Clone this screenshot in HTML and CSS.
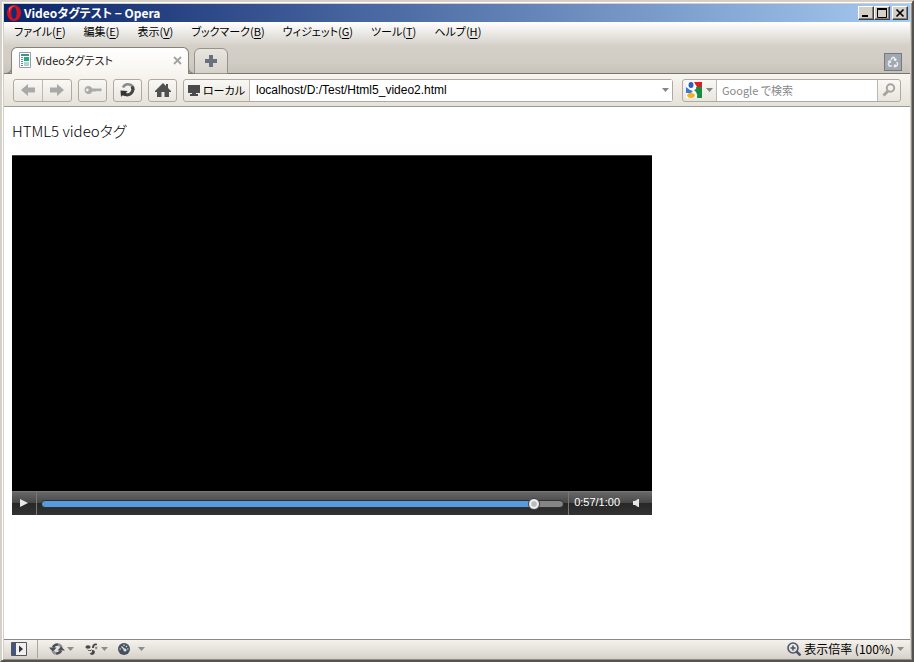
FILE: index.html
```html
<!DOCTYPE html>
<html lang="ja">
<head>
<meta charset="utf-8">
<title>Videoタグテスト - Opera</title>
<link rel="stylesheet" href="styles.css">
</head>
<body>
<div class="window">
  <header class="titlebar">
    <svg class="logo" width="16" height="16" viewBox="0 0 16 16"><ellipse cx="8" cy="8" rx="7" ry="8" fill="#d3131b"/><ellipse cx="8" cy="8" rx="2.7" ry="6" fill="#102c78"/><path d="M3 3Q6 0 9 1Q4 1 3 9Z" fill="#f35c58"/></svg>
    <h1>Videoタグテスト − Opera</h1>
    <div class="winbtns">
      <button class="winbtn" aria-label="最小化"><svg width="10" height="10" viewBox="0 0 10 10"><path d="M1 8h6" stroke="#000" stroke-width="2"/></svg></button>
      <button class="winbtn" aria-label="最大化"><svg width="10" height="10" viewBox="0 0 10 10"><path d="M.5 1v8.500h9V1" fill="none" stroke="#000"/><path d="M0 1h10" stroke="#000" stroke-width="2"/></svg></button>
      <button class="winbtn close" aria-label="閉じる"><svg width="10" height="10" viewBox="0 0 10 10"><path d="M1.500 1.500l7 7m0-7l-7 7" stroke="#000" stroke-width="1.700"/></svg></button>
    </div>
  </header>
  <div class="chrome">
    <nav class="menu">
      <a href="#">ファイル(<u>F</u>)</a>
      <a href="#">編集(<u>E</u>)</a>
      <a href="#">表示(<u>V</u>)</a>
      <a href="#">ブックマーク(<u>B</u>)</a>
      <a href="#">ウィジェット(<u>G</u>)</a>
      <a href="#">ツール(<u>T</u>)</a>
      <a href="#">ヘルプ(<u>H</u>)</a>
    </nav>
    <div class="tabs">
      <div class="tab">
        <svg width="12" height="16" viewBox="0 0 12 16"><path d="M.5.5h11v15H.5z" fill="#fff" stroke="#9a9ea1"/><path d="M2 2h8v2H2z" fill="#4a8c98"/><path d="M2 5h2v1H2zm0 2h2v1H2zm0 2h2v1H2zm0 2h2v1H2z" fill="#4b9ba4"/><path d="M5 5h5v4H5z" fill="#22ad73"/><path d="M5 10h5v4H5z" fill="#a8d5dc"/><path d="M2 13h2v1H2z" fill="#777"/></svg>
        <span class="tabname">Videoタグテスト</span>
        <button class="tabclose" aria-label="タブを閉じる"><svg width="9" height="9" viewBox="0 0 9 9"><path d="M1 1l7 7m0-7L1 8" stroke="#a3a3a3" stroke-width="1.800"/></svg></button>
      </div>
      <button class="newtab" aria-label="新しいタブ"><svg width="12" height="12" viewBox="0 0 12 12"><path d="M4 0h4v4h4v4H8v4H4V8H0V4h4z" fill="#69707f"/></svg></button>
      <button class="trash" aria-label="閉じたタブ"><svg width="12" height="12" viewBox="0 0 12 12" fill="none" stroke="#eef0f4" stroke-width="1.400"><path d="M4 4l1.500-2.500h1.500L8.500 4M9 2.500L8.600 4.200 6.800 4M9.700 6l1 2-1 2H7.500M8.500 8.500L7.200 10l1.300 1.300M4.800 10H2.300l-1-2 1.500-2.700M1.200 5.700L3 5l.7 1.800"/></svg></button>
    </div>
  </div>
  <div class="toolbar">
    <div class="group">
      <button class="seg" aria-label="戻る"><svg width="14" height="12" viewBox="0 0 14 12"><path d="M0 6l7-6v3.500h7v5H7V12z" fill="#a9a9a9"/></svg></button>
      <button class="seg" aria-label="進む"><svg width="14" height="12" viewBox="0 0 14 12"><path d="M14 6L7 0v3.500H0v5h7V12z" fill="#a9a9a9"/></svg></button>
    </div>
    <button class="tool" aria-label="パスワード"><svg width="18" height="10" viewBox="0 0 18 10"><path fill-rule="evenodd" d="M4.500 1a4 4 0 0 1 3.800 2.600H17l1 1.200-1.500 1.700H16l-1-.8-1 .8-1-.8-1 .8H8.300A4 4 0 1 1 4.500 1zM3.300 3.600a1.400 1.400 0 1 0 0 2.800 1.400 1.400 0 0 0 0-2.800z" fill="#aaa"/></svg></button>
    <button class="tool" aria-label="再読み込み"><svg width="16" height="16" viewBox="0 0 16 16"><path d="M3 5.500A5.500 5.500 0 0 1 13.500 8" fill="none" stroke="#8b8b8b" stroke-width="2.600"/><path d="M12 4.500A5.500 5.500 0 0 1 5 12.300" fill="none" stroke="#444" stroke-width="3"/><path d="M.5 8.500l7 .5-1.500 2 1 3-5-.5-1 1.500z" fill="#333"/></svg></button>
    <button class="tool" aria-label="ホーム"><svg width="16" height="14" viewBox="0 0 16 14"><path d="M8 0l3 3V1h2v4l3 3v1h-2v5H9.500V9h-3v5H2V9H0V8z" fill="#505050"/></svg></button>
    <div class="field address">
      <button class="local"><svg width="12" height="12" viewBox="0 0 12 12"><path d="M0 1h12v8H8v1h2v2H2v-2h2V9H0z" fill="#4a4a4a"/></svg>ローカル</button>
      <input type="text" aria-label="アドレス" value="localhost/D:/Test/Html5_video2.html">
      <button class="drop" aria-label="履歴"><svg width="7" height="4" viewBox="0 0 7 4"><path d="M0 0h7L3.500 4z" fill="#858585"/></svg></button>
    </div>
    <div class="field search">
      <button class="engine" aria-label="検索エンジン"><svg width="16" height="16" viewBox="0 0 16 16"><path d="M0 0h16v16H0z" fill="#fdfdfd"/><path d="M8 0h8v5h-5z" fill="#e21c25"/><path d="M10 5h6v11h-5q1-3-1-6l-2-2q3-1 2-3z" fill="#168c43"/><ellipse cx="5" cy="3" rx="2.500" ry="3" fill="#2a62c4"/><path d="M0 5l4 3 3 1-2 2H0z" fill="#3f78d2"/><ellipse cx="5" cy="13.500" rx="3.800" ry="2.400" fill="#f2b31c"/></svg><svg width="7" height="4" viewBox="0 0 7 4"><path d="M0 0h7L3.500 4z" fill="#858585"/></svg></button>
      <input type="text" aria-label="検索" placeholder="Google で検索">
      <button class="go" aria-label="検索する"><svg width="14" height="14" viewBox="0 0 14 14" fill="none" stroke="#a7a49d"><circle cx="8.500" cy="5" r="3.700" stroke-width="2"/><path d="M6 8l-4.500 4.500" stroke-width="3"/></svg></button>
    </div>
  </div>
  <main class="page">
    <p class="caption">HTML5 videoタグ</p>
    <div class="player">
      <video class="screen"></video>
      <div class="controls">
        <button class="play" aria-label="再生"><svg width="8" height="8" viewBox="0 0 8 8"><path d="M0 0l8 4-8 4z" fill="#e8e8e8"/></svg></button>
        <div class="seekbox"><input class="seek" type="range" aria-label="再生位置" min="0" max="60" step="0.1" value="57.3"></div>
        <span class="time">0:57/1:00</span>
        <button class="mute" aria-label="音量"><svg width="6" height="8" viewBox="0 0 6 8"><path d="M0 2h2l3-2h1v8H5L2 6H0z" fill="#e4e4e4"/></svg></button>
      </div>
    </div>
  </main>
  <footer class="status">
    <button class="panel" aria-label="パネル"><svg width="16" height="14" viewBox="0 0 16 14"><path d="M.5.5h15v13H.5z" fill="#f2f0ec" stroke="#4f5560"/><path d="M1 1h4v12H1z" fill="#44557f"/><path d="M8 3.500l4 3.500-4 3.500z" fill="#333"/></svg></button>
    <button class="stat" aria-label="同期"><svg width="16" height="14" viewBox="0 0 16 14"><path d="M4 5.500Q5.500 2.300 9 2.500" fill="none" stroke="#4a505b" stroke-width="2.600"/><path d="M9 2.500Q12 3 12.500 6" fill="none" stroke="#8d9096" stroke-width="2.600"/><path d="M0 5.500h7.500L4 10zM16 8.500H8.500L12 4.500z" fill="#4a505b"/><path d="M12 8.500Q10.500 11.700 7 11.500" fill="none" stroke="#4a505b" stroke-width="2.600"/><path d="M7 11.500Q4.500 11 3.700 9" fill="none" stroke="#8d9096" stroke-width="2.600"/></svg><svg width="7" height="4" viewBox="0 0 7 4"><path d="M0 0h7L3.500 4z" fill="#8d8d8d"/></svg></button>
    <button class="stat" aria-label="Unite"><svg width="14" height="14" viewBox="0 0 14 14" fill="#484848"><ellipse cx="3" cy="5" rx="2.600" ry="1.800"/><path d="M2 7q2.500 2.500 5 0l-1 2H3.500z"/><path d="M7 6Q7 2 10 1.500l2 .2V3L9.800 3.500Q9 4 9 6z"/><path d="M7 8q2.500-.5 3 2-.5 3-3.500 3l-2-1.500Q7.500 11 7 8z"/><path d="M10 5l2.500-.5-.5 2.500-1.500.5z" fill="#888"/></svg><svg width="7" height="4" viewBox="0 0 7 4"><path d="M0 0h7L3.500 4z" fill="#8d8d8d"/></svg></button>
    <button class="stat turbo" aria-label="Turbo"><svg width="12" height="12" viewBox="0 0 12 12"><circle cx="6" cy="6" r="6" fill="#46505f"/><path d="M3.500 3.500L7 7M8 3l1 1M6 1.500V3M1.500 6H3M9 6h1.500" stroke="#dce4ec" stroke-width="1.200"/><circle cx="7" cy="7" r="1.500" fill="#dce4ec"/></svg><svg width="7" height="4" viewBox="0 0 7 4"><path d="M0 0h7L3.500 4z" fill="#8d8d8d"/></svg></button>
    <button class="stat zoom"><svg width="14" height="14" viewBox="0 0 14 14" fill="none" stroke="#4b5569"><circle cx="6" cy="6" r="5" stroke-width="1.600"/><path d="M3.500 6h5M6 3.500v5" stroke-width="1.600"/><path d="M9.500 9.500l4 4" stroke-width="2.500"/></svg><span>表示倍率 (100%)</span><svg width="7" height="4" viewBox="0 0 7 4"><path d="M0 0h7L3.500 4z" fill="#8d8d8d"/></svg></button>
  </footer>
</div>
</body>
</html>
```
FILE: styles.css
```css
* { box-sizing: border-box; }
body {
  margin: 0;
  font: 12px/16px "Noto Sans CJK JP", sans-serif;
  font-feature-settings: "palt";
  color: #000;
}
button, input {
  font: inherit;
  font-feature-settings: inherit;
  color: inherit;
  background: none;
  border: 0;
  padding: 0;
  margin: 0;
}
button { display: flex; align-items: center; justify-content: center; }
svg { display: block; flex: none; }

.window {
  display: flex;
  flex-direction: column;
  min-height: 100vh;
  padding: 2px;
  border: 2px solid;
  border-color: #d4d0c8 #55534f #55534f #d4d0c8;
  background: #d4d0c8;
  box-shadow: inset 1px 1px #fff, inset -1px -1px #918e88;
}

.titlebar {
  display: flex;
  align-items: center;
  height: 18px;
  padding: 0 2px;
  color: #fff;
  background: linear-gradient(90deg, #0a246a, #a6caf0);
}
.titlebar h1 { flex: 1; margin: 0 0 0 2px; font-size: 12px; line-height: 16px; font-weight: 700; }
.winbtns { display: flex; }
.winbtn {
  width: 16px;
  height: 14px;
  background: #d4d0c8;
  border: 1px solid;
  border-color: #fff #404040 #404040 #fff;
  box-shadow: inset -1px -1px #808080;
}
.winbtn.close { margin-left: 2px; }

.chrome { background: linear-gradient(#fff, #d4d0c8 24px, #d1cdc4 40px, #c7c2b8); }
.menu { display: flex; gap: 18px; height: 20px; padding: 0 10px; font-size: 11px; line-height: 18px; }
.menu a { color: #000; text-decoration: none; white-space: nowrap; }
.menu u { text-underline-offset: 2px; }

.tabs {
  display: flex;
  align-items: flex-end;
  height: 32px;
  padding: 0 8px 0 7px;
  box-shadow: inset 0 -1px #77746e;
}
.tab {
  position: relative;
  display: flex;
  align-items: center;
  width: 178px;
  height: 27px;
  padding: 0 6px 2px 7px;
  border: 1px solid #85827c;
  border-bottom: 0;
  border-radius: 6px 6px 0 0;
  background: linear-gradient(#fff, #f8f5f0);
}
.tab::before, .tab::after {
  content: "";
  position: absolute;
  bottom: 0;
  width: 6px;
  height: 6px;
  border: 1px solid #85827c;
}
.tab::before { right: 100%; border-width: 0 1px 1px 0; border-radius: 0 0 6px 0; }
.tab::after { left: 100%; border-width: 0 0 1px 1px; border-radius: 0 0 0 6px; }
.tabname { flex: 1; margin-left: 5px; font-size: 11px; color: #222; }
.newtab {
  width: 34px;
  height: 26px;
  margin-left: 5px;
  border: 1px solid #96938c;
  border-radius: 6px 6px 0 0;
  background: linear-gradient(#e8e5df, #d6d2ca);
}
.trash {
  width: 18px;
  height: 18px;
  margin: 0 0 3px auto;
  border: 1px solid #747a84;
  background: #a2a8b0;
}

.toolbar {
  display: flex;
  align-items: center;
  gap: 6px;
  height: 33px;
  padding: 0 9px;
  border-bottom: 1px solid #9c9a91;
  background: linear-gradient(#f8f5f0, #e5e2d9);
}
.group, .tool, .field {
  height: 23px;
  border: 1px solid #aeaaa1;
  border-radius: 3px;
  background: linear-gradient(#faf8f4, #e9e6df);
}
.group, .field { display: flex; }
.group { width: 59px; }
.seg { flex: 1; }
.seg + .seg { border-left: 1px solid #bdb9b1; }
.tool { width: 29px; }
.field input { flex: 1; min-width: 0; padding: 0 6px; background: #fff; outline: 0; }
.address { flex: 1; }
.local { gap: 3px; width: 66px; font-size: 11px; border-right: 1px solid #bdb9b1; }
.address input { font-family: "Liberation Sans", sans-serif; }
.drop { width: 14px; background: #fff; }
.search { width: 219px; margin-left: 3px; }
.engine { gap: 4px; width: 34px; border-right: 1px solid #bdb9b1; }
.search input { padding: 0 5px; font-size: 11px; }
.search input::placeholder { color: #888; opacity: 1; }
.go { width: 23px; border-left: 1px solid #bdb9b1; }

.page { flex: 1; padding: 12px 8px; background: #fff; }
.caption { margin: 0 0 12px; font-size: 15px; line-height: 24px; font-weight: 300; }
.player { max-width: 640px; background: #000; }
.screen { display: block; width: 100%; height: 336px; background: #000; border-top: 1px solid #4b3f3f; }
.controls {
  display: flex;
  height: 24px;
  color: #fff;
  border-top: 1px solid #777;
  background: linear-gradient(#686868, #464646 50%, #272727 50%, #333);
}
.play { width: 25px; padding-bottom: 2px; border-right: 1px solid #777; }
.seekbox { flex: 1; display: flex; align-items: center; padding: 0 4px; border-right: 1px solid #777; }
.seek { appearance: none; width: 100%; height: 12px; }
.seek::-webkit-slider-runnable-track {
  height: 8px;
  border: 1px solid #303030;
  border-radius: 4px;
  background: linear-gradient(90deg, #579bdf 94%, #858585 94%);
}
.seek::-webkit-slider-thumb {
  appearance: none;
  width: 12px;
  height: 12px;
  margin-top: -3px;
  border: 1px solid #444;
  border-radius: 50%;
  background: radial-gradient(#bbb 30%, #eee 50%);
}
.time { padding-left: 5px; font: 11px/21px "Liberation Sans", sans-serif; }
.mute { width: 32px; padding-bottom: 2px; }

.status {
  display: flex;
  align-items: center;
  height: 19px;
  padding: 0 6px;
  border-top: 1px solid #8b8881;
  background: linear-gradient(#f5f2ed, #d8d4cc);
}
.panel { width: 28px; height: 18px; padding-right: 10px; border-right: 1px solid #aaa69e; }
.stat { gap: 2px; margin-left: 11px; }
.turbo { gap: 8px; margin-left: 10px; }
.zoom { gap: 3px; margin-left: auto; }
```
